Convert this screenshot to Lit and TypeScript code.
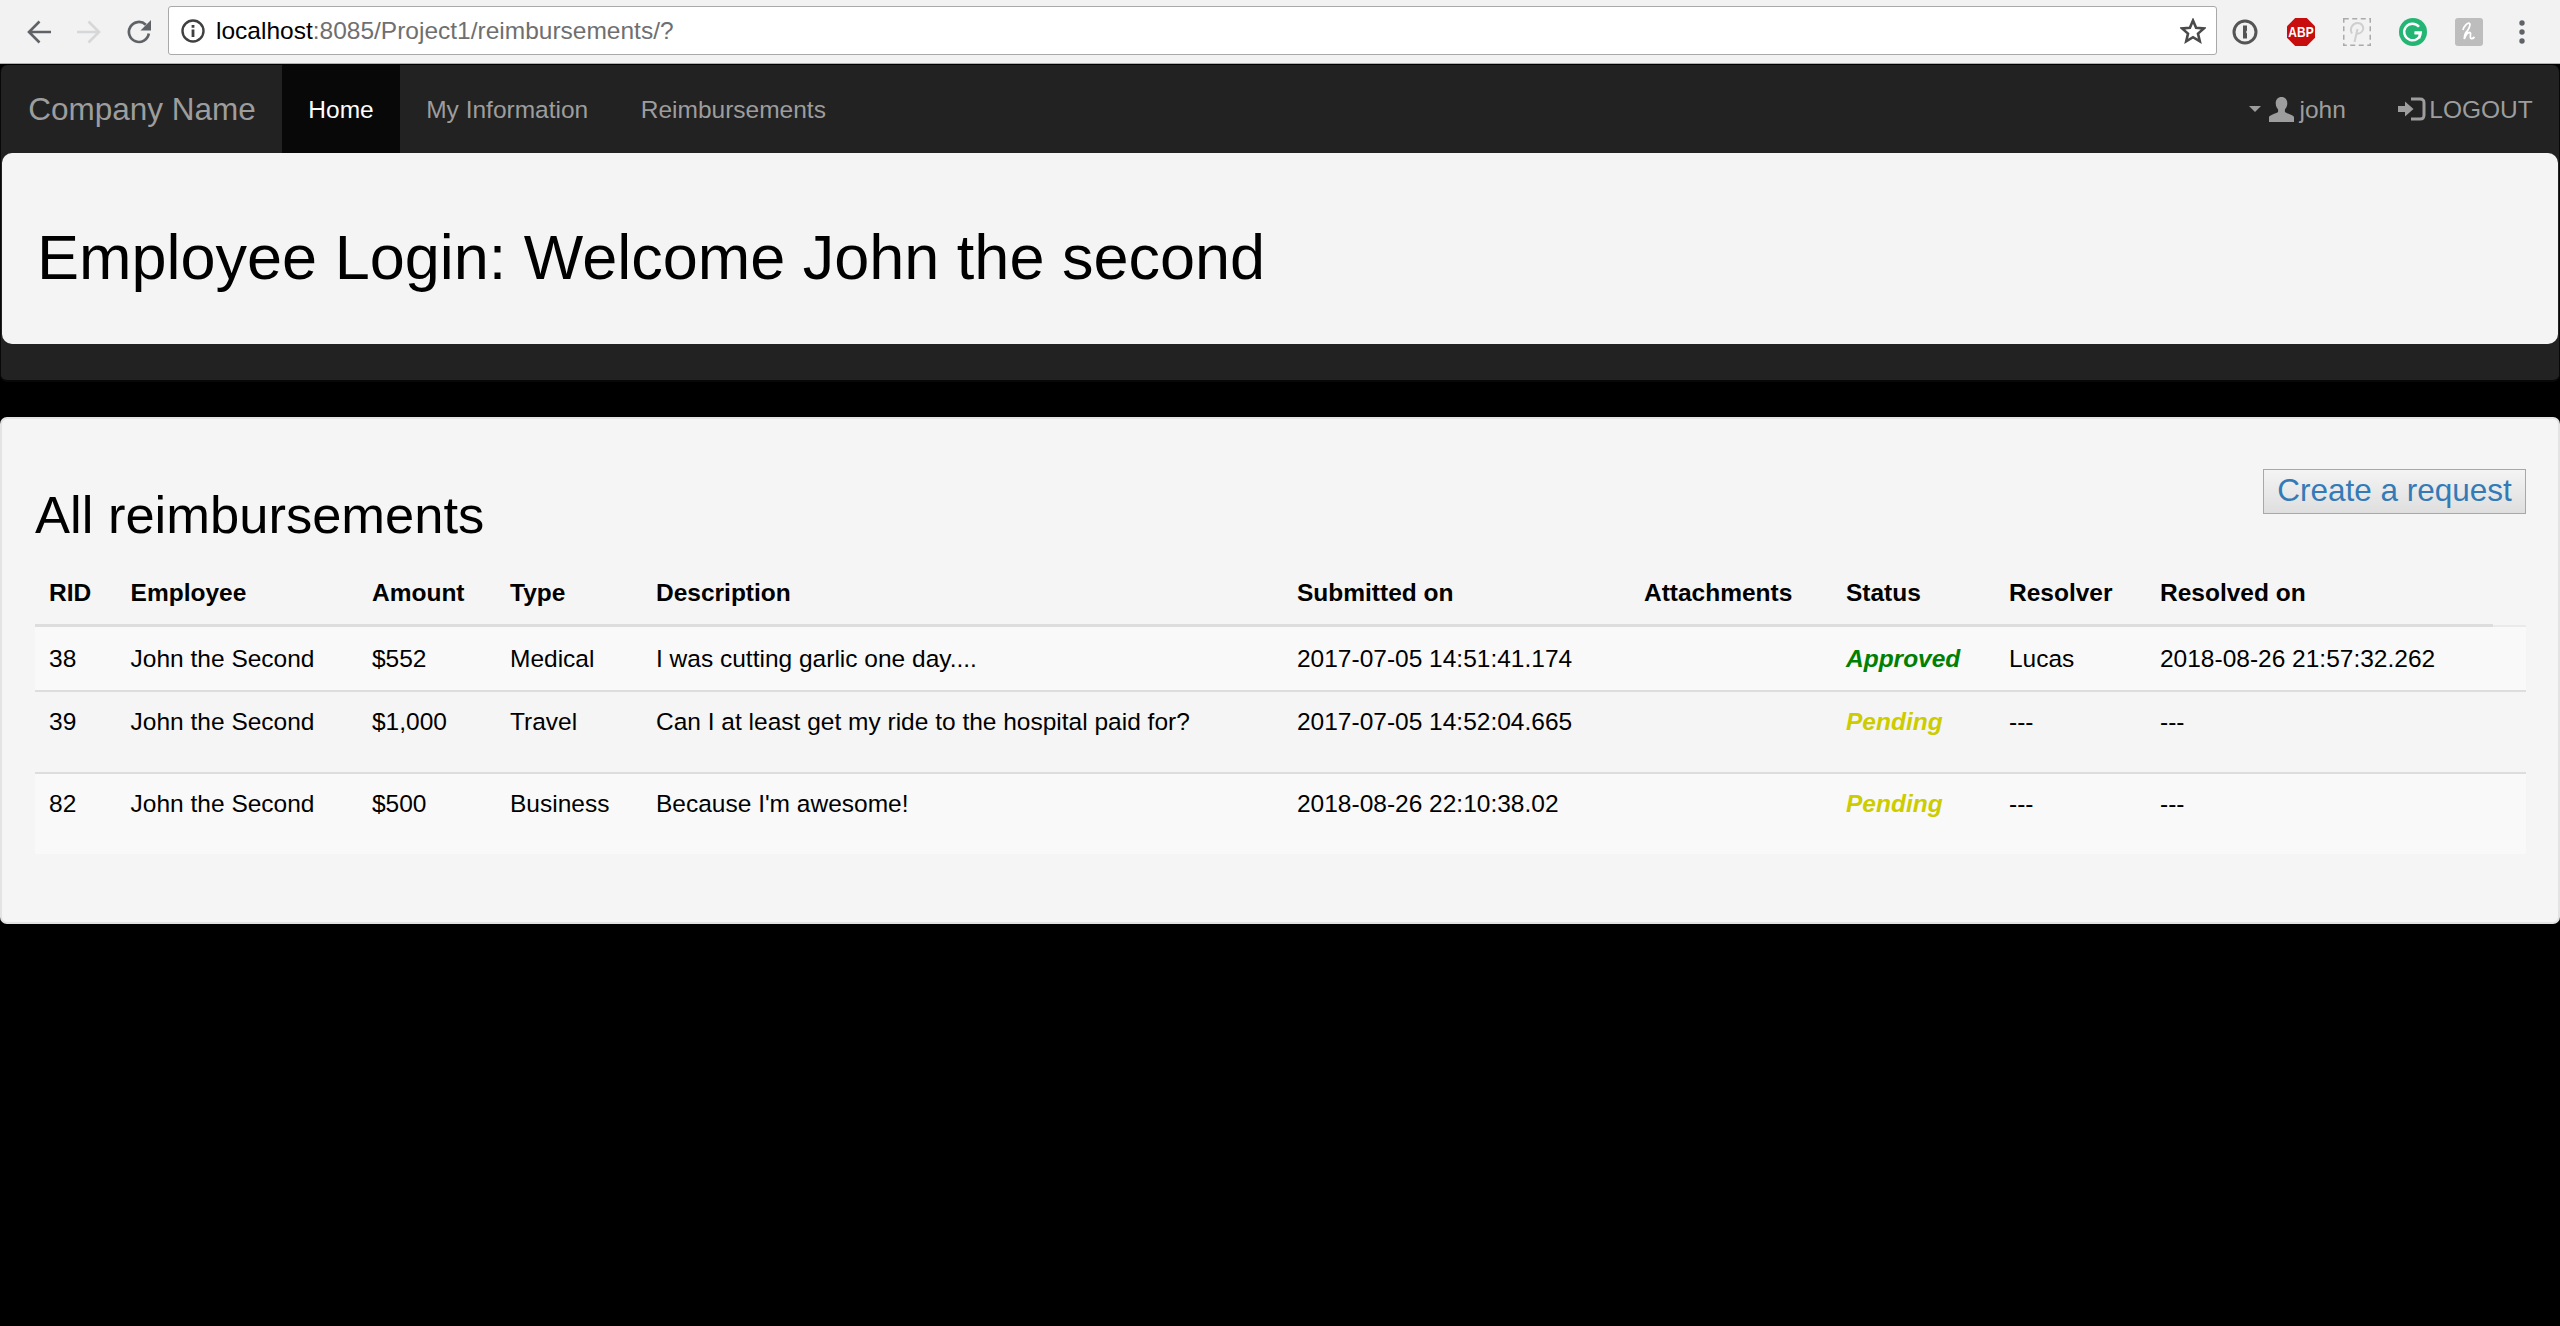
import {LitElement, css, html} from 'lit'
import {customElement} from 'lit/decorators.js'

const heads = ["RID", "Employee", "Amount", "Type", "Description", "Submitted on", "Attachments", "Status", "Resolver", "Resolved on", ""]

const rows = [
    {rid: "38", who: "John the Second", amount: "$552", type: "Medical", text: "I was cutting garlic one day....", at: "2017-07-05 14:51:41.174", status: "Approved", by: "Lucas", done: "2018-08-26 21:57:32.262"},
    {rid: "39", who: "John the Second", amount: "$1,000", type: "Travel", text: "Can I at least get my ride to the hospital paid for?", at: "2017-07-05 14:52:04.665", status: "Pending", by: "---", done: "---"},
    {rid: "82", who: "John the Second", amount: "$500", type: "Business", text: "Because I'm awesome!", at: "2018-08-26 22:10:38.02", status: "Pending", by: "---", done: "---"},
]

const widths = [81.6, 241.4, 138, 146, 641, 347, 202, 163, 151, 347, 33]

const arrow = (color: string, flip: boolean) => html`
    <svg style="color:${color};transform:${flip ? "scaleX(-1)" : "none"}" viewBox="0 0 24 24" width="24" height="24">
        <path d="M24 12H2.500M12.500 1.500L2 12L12.500 22.500" fill="none" stroke="currentColor" stroke-width="2.600"/>
    </svg>`

@customElement('app-root')
export class AppRoot extends LitElement
{
    render()
    {
        return html`
            <div class="chrome">
                <div class="nav-btns">
                    ${arrow("#5f6368", false)}
                    ${arrow("#d6d7d8", true)}
                    <svg viewBox="0 0 24 24" width="24" height="24">
                        <path d="M21.800 13.500A10 10 0 1 1 18.800 4.700" fill="none" stroke="#5f6368" stroke-width="2.700"/>
                        <path d="M24 0v10.500H13.500z" fill="#5f6368"/>
                    </svg>
                </div>
                <div class="omni">
                    <svg class="info" viewBox="0 0 24 24" width="24" height="24">
                        <circle cx="12" cy="12" r="10.500" fill="none" stroke="#404040" stroke-width="2.400"/>
                        <path d="M10.600 10.500h2.800v7.500h-2.800zM10.600 6h2.800v2.800h-2.800z" fill="#404040"/>
                    </svg>
                    <span class="host">localhost</span><span class="rest">:8085/Project1/reimbursements/?</span>
                    <svg viewBox="0 0 26 26" width="26" height="26">
                        <path d="M13 2.500l3.100 7.200 7.800.7-5.900 5.200 1.800 7.700L13 19.200l-6.800 4.100 1.800-7.700-5.900-5.200 7.800-.7z" fill="none" stroke="#4a4a4a" stroke-width="2.600"/>
                    </svg>
                </div>
                <div class="exts">
                    <svg viewBox="0 0 28 28" width="28" height="28">
                        <circle cx="14" cy="14" r="11" fill="none" stroke="#555" stroke-width="3"/>
                        <path d="M12 7.500h4v5l-1 1.500 1 1.500v5h-4z" fill="#555"/>
                    </svg>
                    <svg viewBox="0 0 28 28" width="28" height="28">
                        <path d="M8.200 0h11.600L28 8.200v11.600L19.800 28H8.200L0 19.800V8.200z" fill="#c70d0d"/>
                        <text transform="translate(14 19) scale(1 1.150)" text-anchor="middle" class="abp">ABP</text>
                    </svg>
                    <svg viewBox="0 0 28 28" width="28" height="28">
                        <rect x=".75" y=".75" width="26.500" height="26.500" fill="none" stroke="#aaa" stroke-width="1.500" stroke-dasharray="5 3.500"/>
                        <path d="M11.500 24L14.500 11M9 15.500C6 10 10 5 14.500 5S22 9.500 19 13.500C17 16 14 16 13 15" fill="none" stroke="#cfcfcf" stroke-width="2"/>
                    </svg>
                    <svg viewBox="0 0 28 28" width="28" height="28">
                        <circle cx="14" cy="14" r="14" fill="#22b573"/>
                        <path d="M20 8.800A8.300 8.300 0 1 0 21.800 14.500H15.500" fill="none" stroke="#fff" stroke-width="2.400"/>
                        <path d="M20.500 20.500v-5h-5" fill="none" stroke="#fff" stroke-width="2"/>
                    </svg>
                    <svg viewBox="0 0 28 28" width="28" height="28">
                        <rect width="28" height="28" rx="3" fill="#bdbdbd"/>
                        <path d="M8 12c1-4 5-8 6.500-6.500 1.500 1.500-1.500 7-3.500 9-1 1.100-1.500 3-1.700 6.500 1-3 3-6.500 5.200-6.500 2.500 0-.5 5 1.500 6 1 .5 2.500-.5 3.500-1.500" fill="none" stroke="#fff" stroke-width="1.800"/>
                    </svg>
                    <svg class="kebab" viewBox="0 0 6 24" width="6" height="24">
                        <circle cx="3" cy="3" r="2.700" fill="#5f6368"/><circle cx="3" cy="12" r="2.700" fill="#5f6368"/><circle cx="3" cy="21" r="2.700" fill="#5f6368"/>
                    </svg>
                </div>
            </div>

            <div class="navbar">
                <div class="nav-row">
                    <a class="brand">Company Name</a>
                    <a class="link active">Home</a>
                    <a class="link">My Information</a>
                    <a class="link">Reimbursements</a>
                    <div class="spacer"></div>
                    <a class="link user">
                        <span class="caret"></span>
                        <svg viewBox="0 0 25 25" width="25" height="25"><path d="M12.500 0c3.600 0 5.800 2.600 5.800 6.300 0 2.800-1.200 5-2.400 6.200v2.300c0 1.200 7.500 2.800 9.100 4.900V25H0v-5.300c1.600-2.100 9.100-3.700 9.100-4.900v-2.300C7.900 11.300 6.700 9.100 6.700 6.300 6.700 2.600 8.900 0 12.500 0z" fill="currentColor"/></svg>
                        john
                    </a>
                    <a class="link logout">
                        <svg viewBox="0 0 28 24" width="28" height="24">
                            <path d="M0 9h7V4.500L15.500 12 7 19.500V15H0z" fill="currentColor"/>
                            <path d="M13 2h9c3 0 4 1 4 4v12c0 3-1 4-4 4h-9" fill="none" stroke="currentColor" stroke-width="3"/>
                        </svg>LOGOUT
                    </a>
                </div>
                <div class="jumbo"><h1>Employee Login: Welcome John the second</h1></div>
            </div>

            <div class="well">
                <div class="well-head">
                    <h2>All reimbursements</h2>
                    <button>Create a request</button>
                </div>
                <table>
                    <colgroup>${widths.map(w => html`<col style="width:${w}px">`)}</colgroup>
                    <thead><tr>${heads.map(h => html`<th>${h}</th>`)}</tr></thead>
                    <tbody>
                        ${rows.map(r => html`
                            <tr>
                                <td>${r.rid}</td>
                                <td>${r.who}</td>
                                <td>${r.amount}</td>
                                <td>${r.type}</td>
                                <td>${r.text}</td>
                                <td>${r.at}</td>
                                <td></td>
                                <td class="${r.status.toLowerCase()}">${r.status}</td>
                                <td>${r.by}</td>
                                <td colspan="2">${r.done}</td>
                            </tr>`)}
                    </tbody>
                </table>
            </div>
        `
    }

    static styles = css`
        :host
        {
            display: block;
            min-height: 1326px;
            background: #000;
            font-family: "Liberation Sans", Arial, sans-serif;
            font-size: 24.5px;
            line-height: 35px;
            color: #000;
        }

        .chrome
        {
            box-sizing: border-box;
            height: 64px;
            display: flex;
            align-items: flex-start;
            background: #f2f2f2;
            border-bottom: 1px solid #b0b0b0;
        }

        .nav-btns
        {
            width: 168px;
            height: 63px;
            box-sizing: border-box;
            padding-left: 27px;
            display: flex;
            align-items: center;
            gap: 26px;
            flex: none;
        }

        .omni
        {
            box-sizing: border-box;
            width: 2049px;
            height: 49px;
            margin-top: 6px;
            padding: 0 10px 0 12px;
            display: flex;
            align-items: center;
            background: #fff;
            border: 1px solid #a9a9a9;
            border-radius: 3px;
            flex: none;
        }

        .info
        {
            margin-right: 11px;
            flex: none;
        }

        .rest
        {
            color: #6f6f6f;
            flex: 1;
        }

        .exts
        {
            height: 63px;
            display: flex;
            align-items: center;
            padding-left: 14px;
            gap: 28px;
        }

        .kebab
        {
            margin-left: 8px;
        }

        .abp
        {
            font: bold 12px "Liberation Sans", sans-serif;
            fill: #fff;
        }

        .navbar
        {
            box-sizing: border-box;
            height: 317px;
            margin-top: 1px;
            background: #222;
            border-radius: 7px;
            border: 1px solid #080808;
            border-width: 0 1px 2px;
            overflow: hidden;
        }

        .nav-row
        {
            height: 88px;
            display: flex;
            align-items: stretch;
            color: #9d9d9d;
        }

        .nav-row a
        {
            display: flex;
            align-items: center;
        }

        .brand
        {
            margin-left: 1px;
            padding: 0 26.250px;
            font-size: 31.500px;
        }

        .link
        {
            padding: 0 26.250px;
        }

        .active
        {
            background: #080808;
            color: #fff;
        }

        .spacer
        {
            flex: 1;
        }

        .user
        {
            gap: 5px;
        }

        .caret
        {
            width: 0;
            height: 0;
            margin-right: 3px;
            border: 6.500px solid transparent;
            border-top-color: currentColor;
            border-bottom: 0;
        }

        .logout
        {
            gap: 3px;
        }

        .jumbo
        {
            box-sizing: border-box;
            height: 191px;
            margin: 0 1px;
            padding: 17px 35px 0;
            display: flex;
            align-items: center;
            background: #f4f4f4;
            border-radius: 10px;
        }

        h1
        {
            margin: 0;
            font-size: 63px;
            font-weight: 400;
            line-height: 69px;
        }

        .well
        {
            box-sizing: border-box;
            height: 507px;
            margin-top: 35px;
            padding: 0 32px 0 33px;
            background: #f5f5f5;
            border: 2px solid #e3e3e3;
            border-radius: 7px;
        }

        .well-head
        {
            height: 142px;
            display: flex;
            justify-content: space-between;
            align-items: flex-start;
        }

        h2
        {
            margin: 67px 0 0;
            font-size: 52.500px;
            font-weight: 400;
            line-height: 58px;
        }

        button
        {
            box-sizing: border-box;
            width: 263px;
            height: 45px;
            margin-top: 50px;
            padding: 0 0 3px;
            border: 1px solid #a8a8a8;
            background: linear-gradient(#f4f4f4, #dedede);
            color: #337ab7;
            font: inherit;
            font-size: 31.500px;
            line-height: 38px;
        }

        table
        {
            width: 2491px;
            table-layout: fixed;
            border-collapse: separate;
            border-spacing: 0;
        }

        th
        {
            box-sizing: border-box;
            height: 66px;
            padding: 14px 14px 14px;
            text-align: left;
            vertical-align: bottom;
            font-weight: 700;
            white-space: nowrap;
            border-bottom: 3px solid #ddd;
        }

        th:last-child
        {
            border-bottom: 2px solid #eaeaea;
        }

        td
        {
            box-sizing: border-box;
            padding: 12px 14px 0;
            vertical-align: top;
            white-space: nowrap;
            border-top: 2px solid #ddd;
        }

        tbody tr
        {
            height: 82px;
        }

        tbody tr:first-child
        {
            height: 63px;
        }

        tbody tr:first-child td
        {
            padding-top: 14px;
            border-top: 0;
        }

        tbody tr:nth-child(odd)
        {
            background: #f9f9f9;
        }

        .approved
        {
            color: green;
            font-weight: 700;
            font-style: italic;
        }

        .pending
        {
            color: #cccc00;
            font-weight: 700;
            font-style: italic;
        }
    `
}
